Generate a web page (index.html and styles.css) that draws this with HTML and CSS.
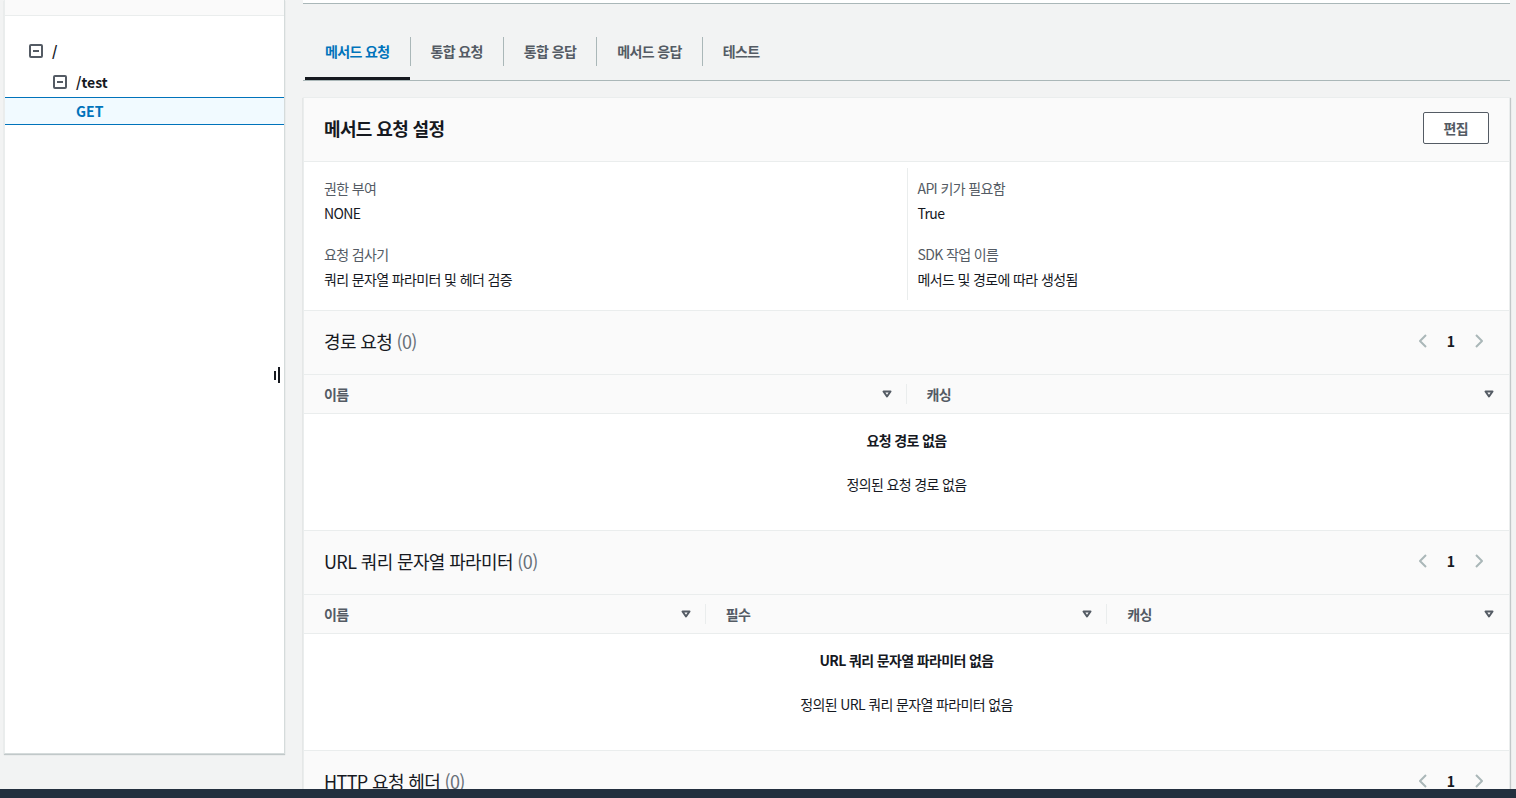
FILE: index.html
```html
<!DOCTYPE html>
<html lang="ko">
<head>
<meta charset="utf-8">
<title>메서드 요청</title>
<link rel="stylesheet" href="styles.css">
</head>
<body>
<div class="app">
  <aside class="side">
    <div class="side-top"></div>
    <ul class="tree">
      <li class="node lvl0">
        <svg class="toggle" width="14" height="14" viewBox="0 0 14 14"><rect x="1" y="1" width="12" height="12" rx="1" fill="none" stroke="#545b64" stroke-width="2"/><line x1="4" y1="7" x2="10" y2="7" stroke="#545b64" stroke-width="2"/></svg>
        <span class="node-name">/</span>
      </li>
      <li class="node lvl1">
        <svg class="toggle" width="14" height="14" viewBox="0 0 14 14"><rect x="1" y="1" width="12" height="12" rx="1" fill="none" stroke="#545b64" stroke-width="2"/><line x1="4" y1="7" x2="10" y2="7" stroke="#545b64" stroke-width="2"/></svg>
        <span class="node-name">/test</span>
      </li>
      <li class="node method selected"><span class="node-name">GET</span></li>
    </ul>
    <div class="resizer"><span class="bar short"></span><span class="bar long"></span></div>
  </aside>

  <main class="main">
    <div class="top-card"></div>
    <nav class="tabs">
      <span class="tab active">메서드 요청</span>
      <span class="sep"></span>
      <span class="tab">통합 요청</span>
      <span class="sep"></span>
      <span class="tab">통합 응답</span>
      <span class="sep"></span>
      <span class="tab">메서드 응답</span>
      <span class="sep"></span>
      <span class="tab">테스트</span>
    </nav>

    <section class="card">
      <div class="card-header">
        <h2 class="card-title">메서드 요청 설정</h2>
        <button class="btn">편집</button>
      </div>
      <div class="details">
        <div class="col">
          <div class="label">권한 부여</div>
          <div class="value">NONE</div>
          <div class="label second">요청 검사기</div>
          <div class="value">쿼리 문자열 파라미터 및 헤더 검증</div>
        </div>
        <div class="col col-right">
          <div class="label">API 키가 필요함</div>
          <div class="value">True</div>
          <div class="label second">SDK 작업 이름</div>
          <div class="value">메서드 및 경로에 따라 생성됨</div>
        </div>
      </div>

      <div class="section">
        <div class="section-header">
          <h3 class="section-title">경로 요청 <span class="count">(0)</span></h3>
          <div class="pager">
            <svg class="chev" width="16" height="16" viewBox="0 0 16 16"><polyline points="11,2 5,8 11,14" fill="none" stroke="#aab7b8" stroke-width="2" stroke-linejoin="round"/></svg>
            <span class="page">1</span>
            <svg class="chev" width="16" height="16" viewBox="0 0 16 16"><polyline points="5,2 11,8 5,14" fill="none" stroke="#aab7b8" stroke-width="2" stroke-linejoin="round"/></svg>
          </div>
        </div>
        <div class="thead cols-2">
          <div class="th"><span class="th-label">이름</span><svg class="sort" width="16" height="16" viewBox="0 0 16 16"><polygon points="4.5,5.5 11.5,5.5 8,10.5" fill="none" stroke="#545b64" stroke-width="2" stroke-linejoin="round"/></svg><span class="th-div"></span></div>
          <div class="th"><span class="th-label">캐싱</span><svg class="sort" width="16" height="16" viewBox="0 0 16 16"><polygon points="4.5,5.5 11.5,5.5 8,10.5" fill="none" stroke="#545b64" stroke-width="2" stroke-linejoin="round"/></svg><span class="th-div last"></span></div>
        </div>
        <div class="empty">
          <div class="empty-title">요청 경로 없음</div>
          <div class="empty-text">정의된 요청 경로 없음</div>
        </div>
      </div>

      <div class="section">
        <div class="section-header">
          <h3 class="section-title">URL 쿼리 문자열 파라미터 <span class="count">(0)</span></h3>
          <div class="pager">
            <svg class="chev" width="16" height="16" viewBox="0 0 16 16"><polyline points="11,2 5,8 11,14" fill="none" stroke="#aab7b8" stroke-width="2" stroke-linejoin="round"/></svg>
            <span class="page">1</span>
            <svg class="chev" width="16" height="16" viewBox="0 0 16 16"><polyline points="5,2 11,8 5,14" fill="none" stroke="#aab7b8" stroke-width="2" stroke-linejoin="round"/></svg>
          </div>
        </div>
        <div class="thead cols-3">
          <div class="th"><span class="th-label">이름</span><svg class="sort" width="16" height="16" viewBox="0 0 16 16"><polygon points="4.5,5.5 11.5,5.5 8,10.5" fill="none" stroke="#545b64" stroke-width="2" stroke-linejoin="round"/></svg><span class="th-div"></span></div>
          <div class="th"><span class="th-label">필수</span><svg class="sort" width="16" height="16" viewBox="0 0 16 16"><polygon points="4.5,5.5 11.5,5.5 8,10.5" fill="none" stroke="#545b64" stroke-width="2" stroke-linejoin="round"/></svg><span class="th-div"></span></div>
          <div class="th"><span class="th-label">캐싱</span><svg class="sort" width="16" height="16" viewBox="0 0 16 16"><polygon points="4.5,5.5 11.5,5.5 8,10.5" fill="none" stroke="#545b64" stroke-width="2" stroke-linejoin="round"/></svg><span class="th-div last"></span></div>
        </div>
        <div class="empty">
          <div class="empty-title">URL 쿼리 문자열 파라미터 없음</div>
          <div class="empty-text">정의된 URL 쿼리 문자열 파라미터 없음</div>
        </div>
      </div>

      <div class="section">
        <div class="section-header">
          <h3 class="section-title">HTTP 요청 헤더 <span class="count">(0)</span></h3>
          <div class="pager">
            <svg class="chev" width="16" height="16" viewBox="0 0 16 16"><polyline points="11,2 5,8 11,14" fill="none" stroke="#aab7b8" stroke-width="2" stroke-linejoin="round"/></svg>
            <span class="page">1</span>
            <svg class="chev" width="16" height="16" viewBox="0 0 16 16"><polyline points="5,2 11,8 5,14" fill="none" stroke="#aab7b8" stroke-width="2" stroke-linejoin="round"/></svg>
          </div>
        </div>
      </div>
    </section>
  </main>
</div>
<div class="footer"></div>
</body>
</html>
```

FILE: styles.css
```css
html, body {
  margin: 0;
  padding: 0;
}
body {
  background: #f2f3f3;
  font-family: "Noto Sans CJK KR", "Noto Sans", sans-serif;
  font-size: 14px;
  line-height: 22px;
  letter-spacing: -0.045em;
  color: #16191f;
  height: 798px;
  overflow: hidden;
}
.app {
  display: flex;
  align-items: flex-start;
  padding-left: 4px;
}

/* Side panel */
.side {
  position: relative;
  flex: none;
  box-sizing: border-box;
  width: 281px;
  height: 754px;
  background: #fff;
  border-left: 1px solid #eaeded;
  border-right: 1px solid #d5dbdb;
  border-bottom: 1px solid #d5dbdb;
  box-shadow: 0 1px 1px 0 rgba(0, 28, 36, 0.2);
}
.side-top {
  height: 15px;
  background: #fafafa;
  border-bottom: 1px solid #eaeded;
}
.tree {
  list-style: none;
  margin: 0;
  padding: 19px 0 0;
}
.node {
  display: flex;
  align-items: center;
  height: 31px;
  font-weight: 700;
  letter-spacing: 0;
}
.lvl0 { padding-left: 24px; }
.lvl1 { padding-left: 48px; }
.toggle {
  flex: none;
  margin-right: 9px;
}
.method { padding-left: 71px; }
.selected {
  box-sizing: border-box;
  height: 28px;
  background: #f1faff;
  border-top: 1px solid #0073bb;
  border-bottom: 1px solid #0073bb;
  color: #0073bb;
}
.resizer {
  position: absolute;
  right: 4px;
  top: 367px;
  display: flex;
  align-items: center;
  gap: 2px;
  height: 16px;
}
.bar {
  width: 2px;
  background: #16191f;
}
.bar.short { height: 9px; }
.bar.long { height: 16px; }

/* Main */
.main {
  flex: none;
  width: 1207px;
  margin-left: 18px;
}
.top-card {
  height: 3px;
  background: #fff;
  border-bottom: 1px solid #aab7b8;
}
.tabs {
  display: flex;
  margin-top: 24px;
  padding-left: 2px;
  border-bottom: 1px solid #aab7b8;
}
.tab {
  padding: 12px 20px 15px;
  border-bottom: 3px solid transparent;
  font-weight: 700;
  color: #545b64;
  white-space: nowrap;
}
.tab.active {
  color: #0073bb;
  border-bottom-color: #16191f;
}
.sep {
  align-self: flex-start;
  width: 1px;
  height: 29px;
  margin-top: 9px;
  background: #aab7b8;
}

/* Card */
.card {
  margin-top: 16px;
  background: #fff;
  border: 1px solid #eaeded;
  border-bottom: none;
  box-shadow: 0 1px 1px 0 rgba(0, 28, 36, 0.3), 1px 1px 1px 0 rgba(0, 28, 36, 0.15);
}
.card-header {
  display: flex;
  justify-content: space-between;
  align-items: center;
  padding: 14px 20px 17px;
  background: #fafafa;
  border-bottom: 1px solid #eaeded;
}
.card-title {
  margin: 0;
  font-size: 18px;
  line-height: 22px;
  font-weight: 700;
}
.btn {
  box-sizing: border-box;
  height: 32px;
  padding: 4px 20px;
  border: 1px solid #545b64;
  border-radius: 2px;
  background: #fff;
  color: #545b64;
  font-family: inherit;
  font-size: 14px;
  line-height: 22px;
  letter-spacing: inherit;
  font-weight: 700;
}
.details {
  display: grid;
  grid-template-columns: 1fr 1fr;
  padding: 6px 0 10px;
}
.col {
  padding: 9px 20px 10px;
}
.col-right {
  padding-left: 10px;
  border-left: 1px solid #eaeded;
}
.label {
  color: #545b64;
}
.label.second {
  margin-top: 19px;
}
.value {
  margin-top: 3px;
}

/* Sections */
.section {
  border-top: 1px solid #eaeded;
}
.section-header {
  display: flex;
  justify-content: space-between;
  align-items: center;
  padding: 19px 20px 22px;
  background: #fafafa;
}
.section-title {
  margin: 0;
  font-size: 18px;
  line-height: 22px;
  font-weight: 400;
}
.count {
  color: #687078;
}
.pager {
  display: flex;
  align-items: center;
  height: 22px;
  margin-right: -2px;
}
.chev {
  padding: 0 4px;
}
.page {
  padding: 0 9px;
  margin: 0 3px;
  font-weight: 700;
  letter-spacing: 0;
}
.thead {
  display: grid;
  height: 38px;
  background: #fafafa;
  border-top: 1px solid #eaeded;
  border-bottom: 1px solid #eaeded;
}
.cols-2 { grid-template-columns: 1fr 1fr; }
.cols-3 { grid-template-columns: 1fr 1fr 1fr; }
.th {
  display: flex;
  align-items: center;
  padding-left: 20px;
  font-weight: 700;
  color: #545b64;
}
.th-label { flex: 1; }
.sort { flex: none; }
.th-div {
  width: 1px;
  height: 20px;
  margin-left: 11px;
  background: #eaeded;
}
.th-div.last { background: transparent; }
.empty {
  padding: 15px 0 35px;
  text-align: center;
}
.empty-title {
  font-weight: 700;
}
.empty-text {
  margin-top: 22px;
}

.footer {
  position: fixed;
  left: 0;
  right: 0;
  bottom: 0;
  height: 9px;
  background: #232f3e;
}
```
